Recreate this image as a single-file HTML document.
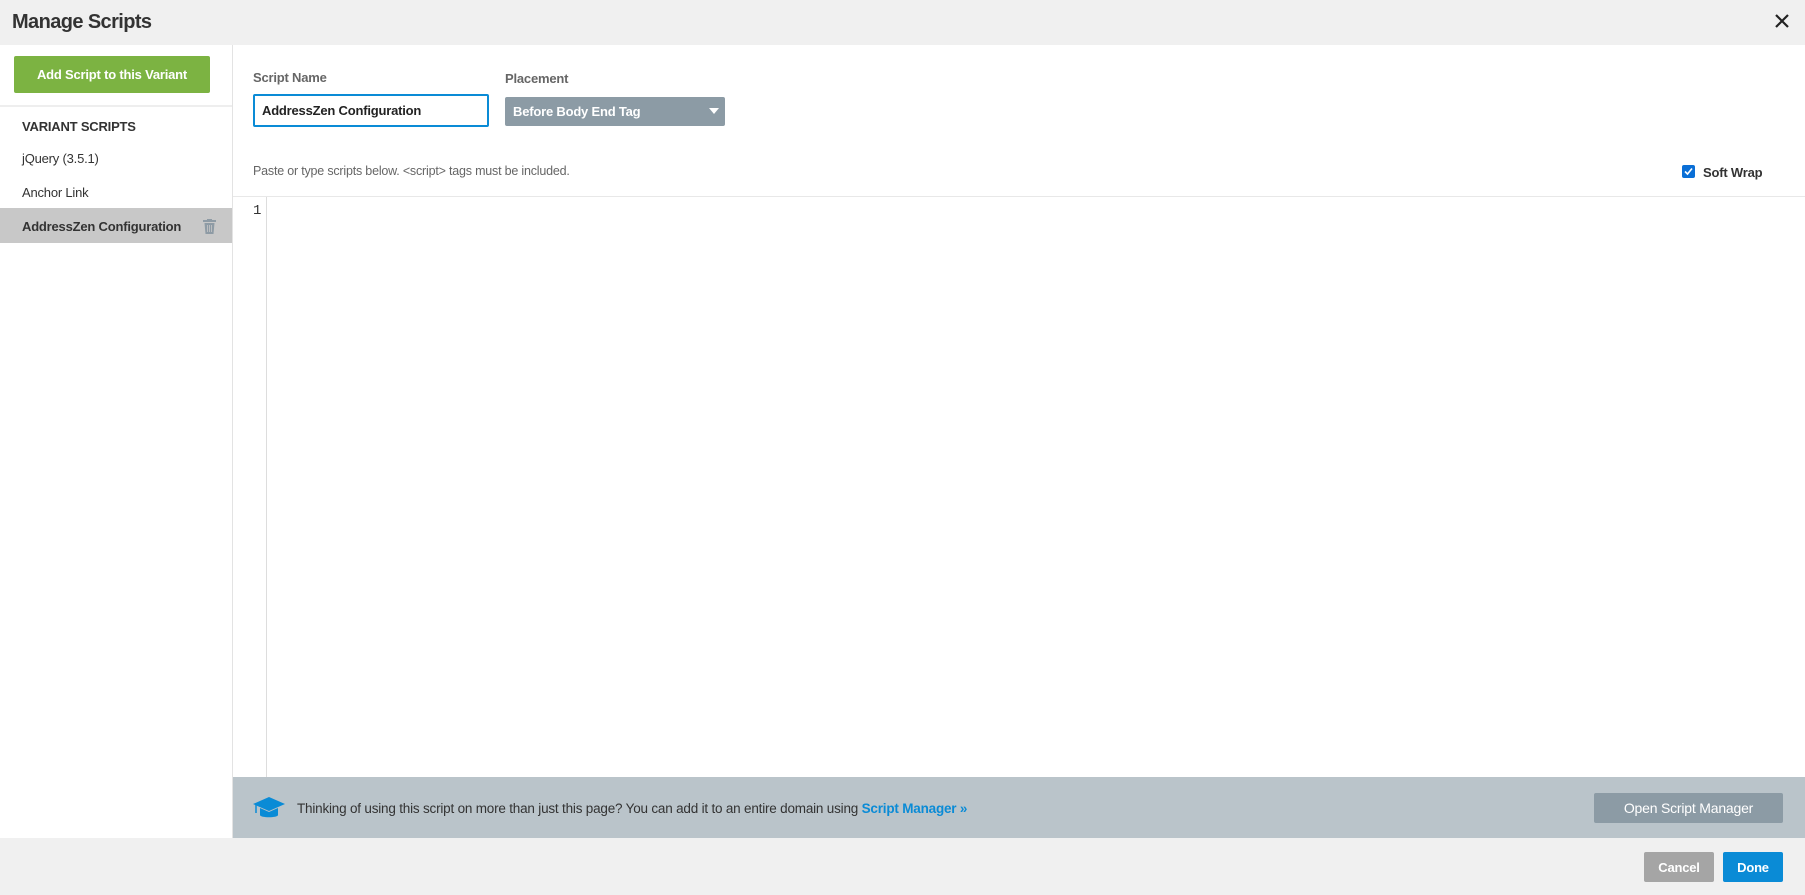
<!DOCTYPE html>
<html><head><meta charset="utf-8"><style>
*{box-sizing:border-box;margin:0;padding:0}
body{width:1805px;height:895px;overflow:hidden;font-family:"Liberation Sans",sans-serif;color:#333;background:#fff;position:relative;letter-spacing:-0.2px}
.a{position:absolute}
.header{left:0;top:0;width:1805px;height:45px;background:#f0f0f0}
.title{left:12px;top:11px;font-size:20px;font-weight:bold;color:#333;letter-spacing:-0.6px}
.side{left:0;top:45px;width:233px;height:793px;border-right:1px solid #e3e3e3;background:#fff}
.green{left:14px;top:56px;width:196px;height:37px;background:#7cb342;border-radius:2px;color:#fff;font-size:13px;font-weight:bold;text-align:center;line-height:38px}
.item{left:22px;font-size:13px;color:#333}
.sel{left:0;top:208px;width:232px;height:35px;background:#c8c8c8}
.lab{font-size:13px;font-weight:bold;color:#666}
.input{left:253px;top:94px;width:236px;height:33px;border:2px solid #0a8bd6;border-radius:2px;font-size:13px;font-weight:bold;padding-left:7px;line-height:30px;color:#222}
.select{left:505px;top:97px;width:220px;height:29px;background:#8c9ba5;border-radius:2px;color:#fff;font-size:13px;font-weight:bold;padding-left:8px;line-height:30px}
.btn{color:#fff;font-size:14px;text-align:center;border-radius:2px}
</style></head><body>
<div class="a header"></div>
<div class="a title">Manage Scripts</div>
<svg class="a" style="left:1775px;top:14px" width="14" height="14" viewBox="0 0 14 14"><path d="M1 1L13 13M13 1L1 13" stroke="#222" stroke-width="2.2"/></svg>
<div class="a side"></div>
<div class="a green">Add Script to this Variant</div>
<div class="a" style="left:0;top:105px;width:232px;height:2px;background:#eee"></div>
<div class="a item" style="top:119px;font-weight:bold">VARIANT SCRIPTS</div>
<div class="a item" style="top:151px">jQuery (3.5.1)</div>
<div class="a item" style="top:185px">Anchor Link</div>
<div class="a sel"></div>
<div class="a item" style="top:219px;font-weight:bold;color:#333">AddressZen Configuration</div>
<svg class="a" style="left:203px;top:219px" width="13" height="15" viewBox="0 0 13 15"><rect x="0" y="1" width="13" height="2" fill="#8e9ba5"/><rect x="4" y="0" width="5" height="2" fill="#8e9ba5"/><path d="M1.5 4H11.5L10.5 15H2.5Z" fill="#8e9ba5"/><path d="M4.5 6V13M6.5 6V13M8.5 6V13" stroke="#c8c8c8" stroke-width="0.8"/></svg>

<div class="a lab" style="left:253px;top:70px">Script Name</div>
<div class="a lab" style="left:505px;top:71px">Placement</div>
<div class="a input">AddressZen Configuration</div>
<div class="a select">Before Body End Tag</div>
<svg class="a" style="left:709px;top:108px" width="10" height="6" viewBox="0 0 10 6"><path d="M0 0H10L5 6Z" fill="#fff"/></svg>
<div class="a" style="left:253px;top:164px;font-size:12.5px;color:#666">Paste or type scripts below. &lt;script&gt; tags must be included.</div>
<div class="a" style="left:1682px;top:165px;width:13px;height:13px;background:#0a6fd6;border-radius:2px"></div>
<svg class="a" style="left:1684px;top:167px" width="9" height="9" viewBox="0 0 9 9"><path d="M1 4.5L3.5 7L8 1.5" stroke="#fff" stroke-width="1.6" fill="none"/></svg>
<div class="a" style="left:1703px;top:165px;font-size:13px;font-weight:bold;color:#333">Soft Wrap</div>

<div class="a" style="left:233px;top:196px;width:1572px;height:1px;background:#e8e8e8"></div>
<div class="a" style="left:266px;top:197px;width:1px;height:580px;background:#ddd"></div>
<div class="a" style="left:253px;top:203px;font-family:'Liberation Mono',monospace;font-size:14px;color:#333">1</div>

<div class="a" style="left:233px;top:777px;width:1572px;height:61px;background:#bac4ca"></div>
<svg class="a" style="left:253px;top:795px" width="32" height="26" viewBox="0 0 32 26"><path d="M16 2L32 9L16 16L0 9Z" fill="#0a8bd6"/><path d="M7 13V20C7 23 25 23 25 20V13L16 17Z" fill="#0a8bd6"/><path d="M3 10V18" stroke="#0a8bd6" stroke-width="1.5"/></svg>
<div class="a" style="left:297px;top:801px;font-size:13.5px;color:#333">Thinking of using this script on more than just this page? You can add it to an entire domain using <b style="color:#0a8bd6">Script Manager »</b></div>
<div class="a btn" style="left:1594px;top:793px;width:189px;height:30px;line-height:31px;background:#8c9ba5">Open Script Manager</div>

<div class="a" style="left:0;top:838px;width:1805px;height:57px;background:#f0f0f0"></div>
<div class="a btn" style="left:1644px;top:852px;width:70px;height:30px;line-height:31px;background:#a5a5a5;font-weight:bold;font-size:13px">Cancel</div>
<div class="a btn" style="left:1723px;top:852px;width:60px;height:30px;line-height:31px;background:#0a8bd6;font-weight:bold;font-size:13px">Done</div>
</body></html>
